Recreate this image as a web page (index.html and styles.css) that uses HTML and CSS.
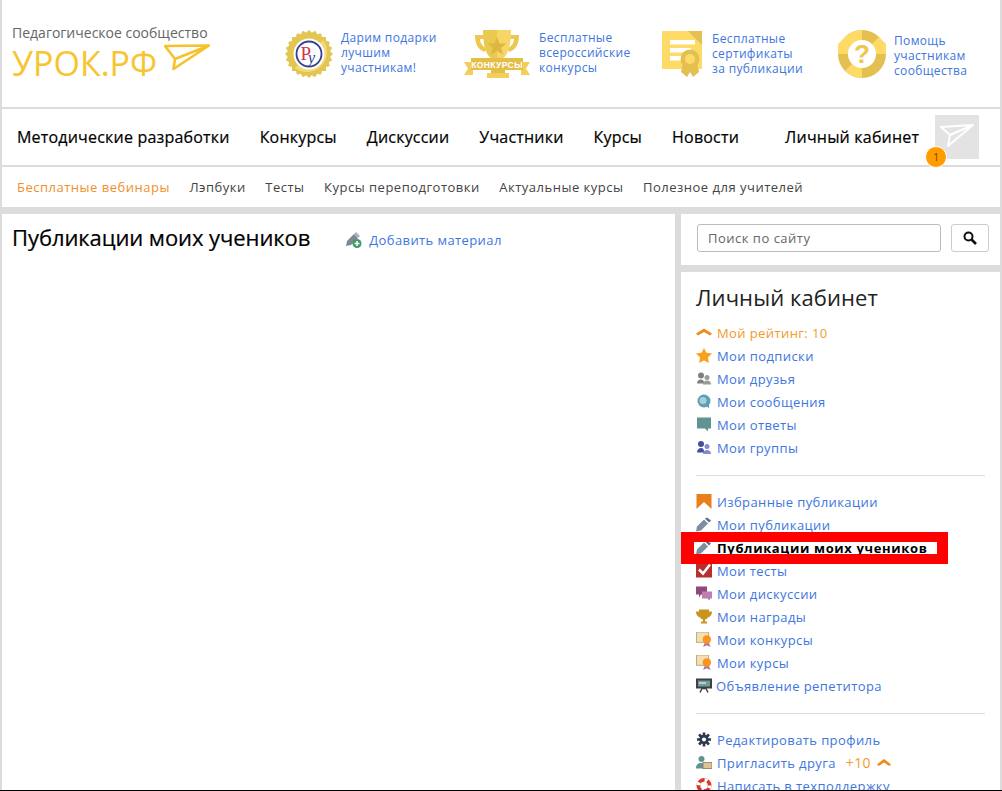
FILE: index.html
```html
<!DOCTYPE html>
<html lang="ru">
<head>
<meta charset="utf-8">
<title>Публикации моих учеников</title>
<link rel="stylesheet" href="styles.css">
</head>
<body>
<div class="page">
  <header class="top">
    <a class="logo">
      <span class="logo-sub">Педагогическое сообщество</span>
      <span class="logo-main">УРОК.РФ
        <svg class="logo-plane" viewBox="0 0 46 28"><path d="M1 2 L45 1.500 L9.500 25 L11 15 Z M11 15 L45 1.500" fill="none" stroke="#f6c22c" stroke-width="2.600" stroke-linejoin="round"/></svg>
      </span>
    </a>
    <a class="promo promo-1">
      <svg class="pi" width="48" height="48" viewBox="0 0 48 48">
        <g fill="#e3c552">
          <rect x="7" y="7" width="34" height="34"/>
          <rect x="7" y="7" width="34" height="34" transform="rotate(15 24 24)"/>
          <rect x="7" y="7" width="34" height="34" transform="rotate(30 24 24)"/>
          <rect x="7" y="7" width="34" height="34" transform="rotate(45 24 24)"/>
          <rect x="7" y="7" width="34" height="34" transform="rotate(60 24 24)"/>
          <rect x="7" y="7" width="34" height="34" transform="rotate(75 24 24)"/>
        </g>
        <path d="M38 10A20 20 0 0 1 10 38Z" fill="#f3da78"/>
        <circle cx="24" cy="24" r="15.500" fill="#fff"/>
        <circle cx="24" cy="24" r="12.500" fill="#fff" stroke="#35408f" stroke-width="1.800"/>
        <text x="15.500" y="30" class="seal-p">Р</text>
        <text x="23" y="33" class="seal-y">у</text>
      </svg>
      <span>Дарим подарки<br>лучшим<br>участникам!</span>
    </a>
    <a class="promo promo-2">
      <svg class="pi" width="66" height="49" viewBox="0 0 66 49">
        <path d="M19 6h-8c0 9 3 15 10 17l1-4c-4-2-6-6-6-9h4zM47 6h8c0 9-3 15-10 17l-1-4c4-2 6-6 6-9h-4z" fill="#ecc850"/>
        <path d="M19 1h14v30h-3c-8-3-11-14-11-30z" fill="#e9c94f"/>
        <path d="M33 1h14c0 16-3 27-11 30h-3z" fill="#f7d566"/>
        <path d="M33 8l2.600 6.500h7l-5.500 4.300 2 7-6.100-4.100-6.100 4.100 2-7-5.500-4.300h7z" fill="#dcb843"/>
        <path d="M0 33h9v13H0l4-6.500zM66 33h-9v13h9l-4-6.500z" fill="#f3cf5a"/>
        <rect x="7" y="29" width="52" height="12" fill="#e3bf4a"/>
        <rect x="27" y="41" width="14" height="3" fill="#e3bf4a"/>
        <rect x="23" y="44" width="22" height="5" fill="#f3cf5a"/>
        <text x="33" y="38.500" class="cup-text">КОНКУРСЫ</text>
      </svg>
      <span>Бесплатные<br>всероссийские<br>конкурсы</span>
    </a>
    <a class="promo promo-3">
      <svg class="pi" width="40" height="48" viewBox="0 0 40 48">
        <rect y="1" width="40" height="38" fill="#fedb66"/>
        <path d="M26 1h14v14z" fill="#e3c04f"/>
        <rect x="8" y="10" width="25" height="4.500" fill="#fff"/>
        <rect x="8" y="18" width="21" height="4.500" fill="#fff"/>
        <rect x="8" y="26" width="11" height="4.500" fill="#fff"/>
        <path d="M21 33h14l2 9-6 5-3-5-3 5-6-5z" fill="#e3c04f"/>
        <circle cx="28" cy="29" r="9.500" fill="#e3c04f"/>
        <circle cx="28" cy="29" r="5" fill="#fedb66"/>
      </svg>
      <span>Бесплатные<br>сертификаты<br>за публикации</span>
    </a>
    <a class="promo promo-4">
      <svg class="pi" width="48" height="48" viewBox="0 0 48 48">
        <circle cx="24" cy="24" r="24" fill="#e3c04f"/>
        <path d="M24 24L7 7 14 2 24 0zM24 24L0 24 0 14 7 7zM24 24L24 48 14 46 7 41zM24 24L48 24 48 14 41 7z" fill="#fedb66"/>
        <circle cx="24" cy="24" r="14" fill="#fff"/>
        <text x="24" y="33" class="q-mark">?</text>
      </svg>
      <span>Помощь<br>участникам<br>сообщества</span>
    </a>
  </header>

  <nav class="menu">
    <a>Методические разработки</a>
    <a>Конкурсы</a>
    <a>Дискуссии</a>
    <a>Участники</a>
    <a>Курсы</a>
    <a>Новости</a>
    <a class="menu-cabinet">Личный кабинет</a>
    <div class="avatar">
      <svg width="34" height="26" viewBox="0 0 34 26"><path d="M1 3 L33 1 L8 22 L10 11 Z M10 11 L33 1" fill="none" stroke="#fff" stroke-width="2" stroke-linejoin="round"/></svg>
      <span class="badge">1</span>
    </div>
  </nav>

  <nav class="subnav">
    <a class="sub-active">Бесплатные вебинары</a>
    <a>Лэпбуки</a>
    <a>Тесты</a>
    <a>Курсы переподготовки</a>
    <a>Актуальные курсы</a>
    <a>Полезное для учителей</a>
  </nav>

  <div class="columns">
    <main class="content">
      <h1>Публикации моих учеников</h1>
      <a class="add">
        <svg width="17" height="16" viewBox="0 0 17 16"><path d="M1 14l1-5 7-7 4 4-7 7z" fill="#7d8894"/><path d="M9 2l2-2 4 4-2 2z" fill="#a9b4bf"/><circle cx="12" cy="11.500" r="4.500" fill="#3e9b68"/><path d="M12 9v5M9.500 11.500h5" stroke="#fff" stroke-width="1.500"/></svg>
        Добавить материал
      </a>
    </main>
    <aside class="side">
      <form class="search">
        <input class="search-input" type="text" placeholder="Поиск по сайту">
        <button class="search-btn" type="button" aria-label="Поиск"><svg width="14" height="14" viewBox="0 0 14 14"><circle cx="5.500" cy="5.500" r="4" fill="none" stroke="#111" stroke-width="2"/><path d="M8.500 8.500L13 13" stroke="#111" stroke-width="2.600"/></svg></button>
      </form>
      <section class="cabinet">
        <h2>Личный кабинет</h2>
        <ul class="links">
          <li class="orange"><svg class="i" viewBox="0 0 16 14"><path d="M0 8l8-5 8 5-2 2-6-3.500L2 10z" fill="#f08a1d"/></svg>Мой рейтинг: 10</li>
          <li><svg class="i" viewBox="0 0 16 15"><path d="M8 0l2.400 4.800 5.600.8-4 3.900.9 5.500L8 12.400 3.100 15l.9-5.500-4-3.900 5.600-.8z" fill="#f9a11f"/></svg>Мои подписки</li>
          <li><svg class="i" viewBox="0 0 16 14"><circle cx="5" cy="4" r="3" fill="#7f7f7f"/><circle cx="11" cy="6" r="2.500" fill="#9a9a9a"/><path d="M1 12c0-3 2-4 4-4s3 1 3 4z" fill="#7f7f7f"/><path d="M7 13c0-3 2-4 4-4s4 1 4 4z" fill="#9a9a9a"/></svg>Мои друзья</li>
          <li><svg class="i" viewBox="0 0 16 14"><circle cx="8" cy="6.500" r="6.500" fill="#5f9fb3"/><circle cx="7" cy="6" r="3.500" fill="#a8cfdb"/><path d="M10 11l3 3v-5z" fill="#5f9fb3"/></svg>Мои сообщения</li>
          <li><svg class="i" viewBox="0 0 16 14"><path d="M1 0h14v11h-3v3l-3-3H1z" fill="#5f9490"/></svg>Мои ответы</li>
          <li><svg class="i" viewBox="0 0 16 14"><circle cx="5" cy="3.500" r="3" fill="#4b4ba0"/><circle cx="11" cy="6" r="2.500" fill="#8a8ac8"/><path d="M1 12c0-3 2-4.500 4-4.500s3 1 3 4.500z" fill="#4b4ba0"/><path d="M7 13.500c0-3 2-4 4-4s4 1 4 4z" fill="#8a8ac8"/></svg>Мои группы</li>
        </ul>
        <hr class="rule">
        <ul class="links">
          <li><svg class="i" viewBox="0 0 16 16"><path d="M0 0h16v16L8 8.500 0 16z" fill="#ea7f1a"/></svg>Избранные публикации</li>
          <li><svg class="i" viewBox="0 0 16 14"><path d="M0 14l1-5 7-7 4 4-7 7z" fill="#7d8ea3"/><path d="M9 1l2-1 4 3-2 2z" fill="#5e6c80"/></svg>Мои публикации</li>
          <li class="marked"><svg class="i" viewBox="0 0 16 14"><path d="M0 14l1-5 7-7 4 4-7 7z" fill="#7d8ea3"/><path d="M9 1l2-1 4 3-2 2z" fill="#5e6c80"/></svg><b class="marked-text">Публикации моих учеников</b></li>
          <li><svg class="i" viewBox="0 0 16 14"><rect width="16" height="14" fill="#b5302f"/><path d="M3 6l4 4 7-9" fill="none" stroke="#fff" stroke-width="2.500"/></svg>Мои тесты</li>
          <li><svg class="i" viewBox="0 0 16 14"><path d="M0 0h11v8H5l-2 3V8H0z" fill="#8e4a7d"/><path d="M6 5h10v7h-2v2l-3-2H6z" fill="#c07fae"/></svg>Мои дискуссии</li>
          <li><svg class="i" viewBox="0 0 16 14"><path d="M3 0h10v2h3c0 3-1 5-4 6-1 1-2 2-3 2v2h2v2H5v-2h2v-2C6 10 5 9 4 8 1 7 0 5 0 2h3z" fill="#c9941f"/></svg>Мои награды</li>
          <li><svg class="i" viewBox="0 0 16 16"><rect width="13" height="11" fill="#f6dfae" stroke="#b9a780"/><path d="M7 16l2-5h4l2 5-4-2z" fill="#a578a8"/><circle cx="11" cy="8" r="4.500" fill="#f9951e"/></svg>Мои конкурсы</li>
          <li><svg class="i" viewBox="0 0 16 16"><rect width="13" height="11" fill="#f6dfae" stroke="#b9a780"/><path d="M7 16l2-5h4l2 5-4-2z" fill="#a578a8"/><circle cx="11" cy="8" r="4.500" fill="#f9951e"/></svg>Мои курсы</li>
          <li class="tutor"><svg class="i" viewBox="0 0 16 14"><rect width="16" height="10" fill="#3f3f3f"/><rect x="2" y="2" width="12" height="6" fill="#6e9c9b"/><rect x="3" y="4" width="7" height="1" fill="#fff"/><path d="M4 14l2-4h4l2 4" fill="none" stroke="#3f3f3f" stroke-width="1.400"/></svg>Объявление репетитора</li>
        </ul>
        <hr class="rule">
        <ul class="links">
          <li><svg class="i" viewBox="0 0 16 16"><path d="M8 .500v15M.500 8h15M2.700 2.700l10.600 10.600M13.300 2.700L2.700 13.300" stroke="#2c3a4d" stroke-width="2.800"/><circle cx="8" cy="8" r="5" fill="#2c3a4d"/><circle cx="8" cy="8" r="2.200" fill="#fff"/></svg>Редактировать профиль</li>
          <li><svg class="i" viewBox="0 0 16 14"><circle cx="5.500" cy="3.500" r="3" fill="#5f9490"/><path d="M0 13c0-4 2-5.500 5-5.500s5 1.500 5 5.500z" fill="#5f9490"/><rect x="7" y="7" width="9" height="6" fill="#d9c49a" stroke="#8a7a5a" stroke-width=".8"/></svg>Пригласить друга <span class="plus">+10</span><svg class="up" viewBox="0 0 16 10"><path d="M0 7l8-6 8 6-2 2-6-4-6 4z" fill="#f08a1d"/></svg></li>
          <li><svg class="i" viewBox="0 0 16 16"><circle cx="8" cy="8" r="6" fill="none" stroke="#d8392b" stroke-width="4"/><circle cx="8" cy="8" r="6" fill="none" stroke="#fff" stroke-width="4" stroke-dasharray="3 6.400"/></svg>Написать в техподдержку</li>
        </ul>
      </section>
    </aside>
  </div>
</div>
</body>
</html>
```
FILE: styles.css
```css
* { box-sizing: border-box; }
html, body { margin: 0; padding: 0; height: 791px; overflow: hidden; background: #000; }
body { font-family: "Open Sans", sans-serif; color: #000; }
a { text-decoration: none; color: inherit; }
ul { list-style: none; margin: 0; padding: 0; }

.page { height: 790px; overflow: hidden; background: #dcdcdc; padding: 0 2px; }

.top { height: 107px; background: #fff; display: flex; }
.logo { display: block; width: 283px; padding: 24px 0 0 10px; }
.logo-sub { display: block; font-size: 14px; line-height: 18px; color: #666; }
.logo-main { display: flex; align-items: flex-start; font-size: 34px; line-height: 42px; color: #f7c52f; white-space: nowrap; }
.logo-plane { width: 46px; height: 28px; margin: 2px 0 0 7px; }

.promo { display: flex; align-items: center; height: 107px; font-size: 12px; line-height: 15px; letter-spacing: .35px; color: #3d76e0; }
.promo-1 { width: 179px; }
.promo-2 { width: 198px; }
.promo-3 { width: 176px; }
.promo-4 { width: 150px; }
.promo-1 .pi { margin-right: 8px; }
.promo-2 .pi { margin-right: 9px; }
.promo-3 .pi { margin-right: 10px; }
.promo-4 .pi { margin-right: 8px; }
.promo-1 span, .promo-2 span { margin-bottom: 2px; }
.promo-4 span { margin-top: 3px; }
.pi { flex: none; }
.seal-p { font: 400 19px "Liberation Serif", serif; fill: #d8304f; }
.seal-y { font: italic 400 16px "Liberation Serif", serif; fill: #35408f; }
.cup-text { font: 700 8.500px "Liberation Sans", sans-serif; fill: #fff; text-anchor: middle; letter-spacing: .4px; }
.q-mark { font: 700 26px "Liberation Sans", sans-serif; fill: #ecc850; text-anchor: middle; }

.menu { height: 56px; margin-top: 2px; background: #fff; display: flex; align-items: center; padding-left: 15px; gap: 30px; font-size: 16px; font-weight: 500; letter-spacing: .2px; color: #000; -webkit-text-stroke: .2px #000; }
.menu a { white-space: nowrap; }
.menu-cabinet { margin-left: 16px; }
.avatar { width: 44px; height: 44px; background: #e3e3e3; margin-left: -14px; display: flex; align-items: center; justify-content: center; position: relative; }
.badge { position: absolute; left: -10px; top: 31px; width: 22px; height: 22px; border-radius: 50%; background: #ff9c00; border: 1px solid #fff; font-size: 11px; font-weight: 400; letter-spacing: 0; -webkit-text-stroke: 0; color: #7a4a00; text-align: center; line-height: 20px; }

.subnav { height: 40px; margin-top: 2px; background: #fff; display: flex; align-items: center; padding-left: 15px; gap: 19.500px; font-size: 13px; letter-spacing: .5px; color: #444; }
.sub-active { color: #ef8f2e; }

.columns { display: flex; gap: 6px; margin-top: 7px; }
.content { width: 673px; height: 600px; background: #fff; padding: 9px 10px 10px; display: flex; align-items: flex-start; gap: 35px; }
h1 { margin: 0; font-size: 22px; line-height: 28px; font-weight: 400; letter-spacing: -.08px; color: #000; -webkit-text-stroke: .2px #000; }
.add { display: flex; align-items: center; gap: 7px; font-size: 13px; line-height: 18px; letter-spacing: .4px; color: #3d76e0; margin-top: 8px; }

.side { width: 319px; }
.search { height: 51px; background: #fff; display: flex; align-items: center; padding: 0 11px 3px 16px; gap: 10px; }
.search-input { flex: 1; min-width: 0; height: 28px; border: 1px solid #bbb; border-radius: 3px; padding: 0 10px; font-family: "Open Sans", sans-serif; font-size: 13px; letter-spacing: .5px; }
.search-input::placeholder { color: #666; }
.search-btn { width: 38px; height: 28px; border: 1px solid #ccc; border-radius: 3px; background: #fff; display: flex; align-items: center; justify-content: center; padding: 0; }

.cabinet { margin-top: 7px; background: #fff; padding: 10px 15px 0; height: 520px; }
h2 { margin: 0 0 9px; font-size: 22px; line-height: 30px; font-weight: 400; color: #222; letter-spacing: .1px; }
.links li { height: 23px; display: flex; align-items: center; font-size: 13px; letter-spacing: .4px; color: #3d76e0; white-space: nowrap; }
.i { width: 16px; height: 15px; margin-right: 5px; flex: none; }
.orange { color: #f39a2d !important; }
.rule { border: 0; border-top: 1px solid #ddd; margin: 16px 0 14px; width: 289px; }
.marked { position: relative; color: #000 !important; }
.marked::before { content: ""; position: absolute; left: -15px; right: 37px; top: -4px; bottom: -5px; border: solid #f00; border-width: 10px 11px 10px 13px; }
.marked-text { font-weight: 700; letter-spacing: .65px; }
.tutor .i { margin-right: 4px; }
.plus { font-size: 14px; color: #f39a2d; margin: 0 6px 0 10px; }
.up { width: 14px; height: 9px; }
```
